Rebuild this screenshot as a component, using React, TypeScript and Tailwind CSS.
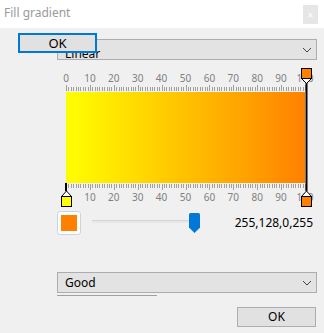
import React from "react";

const TICKS = Array.from({ length: 101 }, (_, i) => i);
const LABELS = Array.from({ length: 11 }, (_, i) => i * 10);
const STEP = 2.39;

function Chevron() {
  return (
    <svg width="10" height="6" viewBox="0 0 10 6" className="shrink-0">
      <polyline points="1,1 5,5 9,1" fill="none" stroke="#444" strokeWidth="1" />
    </svg>
  );
}

function Combo({ label, low }: { label: string; low?: boolean }) {
  return (
    <div className="h-[21px] border border-[#adadad] bg-[#e3e3e3] flex items-center justify-between pl-[7px] pr-[4px]">
      <span className={low ? "relative top-[4px] text-[12px] leading-none" : "text-[12px] leading-none"}>{label}</span>
      <Chevron />
    </div>
  );
}

function Marker({ x, top, color }: { x: number; top: boolean; color: string }) {
  // x is the centre of the marker in overlay coords
  if (top) {
    return (
      <g>
        <polygon points={`${x - 5},10.5 ${x + 5},10.5 ${x},15.5`} fill="#fff" stroke="#000" strokeWidth="1" />
        <rect x={x - 5} y={0.5} width={10} height={10} fill={color} stroke="#000" strokeWidth="1" />
      </g>
    );
  }
  return (
    <g>
      <polygon points={`${x},123 ${x - 5},128.5 ${x + 5},128.5`} fill="#fff" stroke="#000" strokeWidth="1" />
      <rect x={x - 5} y={128.5} width={10} height={10} fill={color} stroke="#000" strokeWidth="1" />
    </g>
  );
}

function GradientEditor() {
  return (
    <div className="relative h-[140px] mt-[8px]">
      {/* the gradient itself */}
      <div className="ml-[9px] mt-[24px] w-[239px] h-[91px] bg-gradient-to-r from-[#ffff00] to-[#ff8000]" />

      {/* rulers and stops */}
      <svg width="260" height="140" viewBox="0 0 260 140" className="absolute inset-0">
        {LABELS.map((n, i) => (
          <text key={"t" + n} x={9 + i * 23.9} y={14} fontSize="10" fill="#808080" textAnchor="middle">
            {n}
          </text>
        ))}
        {TICKS.map((j) => {
          const x = Math.round(9 + j * STEP) + 0.5;
          const major = j % 10 === 0;
          return (
            <g key={"k" + j}>
              <line x1={x} x2={x} y1={major ? 17 : 19} y2={23} stroke="#a0a0a0" strokeWidth="1" />
              <line x1={x} x2={x} y1={116} y2={major ? 122 : 120} stroke="#a0a0a0" strokeWidth="1" />
            </g>
          );
        })}
        {LABELS.map((n, i) => (
          <text key={"b" + n} x={9 + i * 23.9} y={133} fontSize="10" fill="#808080" textAnchor="middle">
            {n}
          </text>
        ))}

        {/* left stop */}
        <line x1={9} x2={9} y1={115} y2={123} stroke="#000" strokeWidth="2" />
        <Marker x={9.5} top={false} color="#ffff00" />

        {/* right stop */}
        <line x1={249.5} x2={249.5} y1={15} y2={123} stroke="#000" strokeWidth="2" />
        <Marker x={249.5} top color="#ff8000" />
        <Marker x={249.5} top={false} color="#ff8000" />
      </svg>
    </div>
  );
}

function SliderThumb() {
  return (
    <svg width="11" height="20" viewBox="0 0 11 20" className="shrink-0 -ml-[2px]">
      <path d="M1.5 0 H9.5 Q11 0 11 1.5 V14.5 L5.5 20 L0 14.5 V1.5 Q0 0 1.5 0 Z" fill="#0078d7" />
    </svg>
  );
}

export default function App() {
  return (
    <div className="relative w-[324px] h-[333px] bg-[#f0f0f0] overflow-hidden font-['Noto_Sans',sans-serif] text-black">
      {/* title bar */}
      <div className="h-[28px] bg-white flex items-start justify-between pl-[4px] pr-[6px]">
        <span className="mt-[5px] text-[12px] text-[#9a9a9a] leading-[16px]">Fill gradient</span>
        <div className="mt-[5px] w-[15px] h-[19px] bg-[#e6e6e6] flex items-center justify-center">
          <span className="text-[8px] text-white leading-none">✕</span>
        </div>
      </div>

      <div className="flex flex-col pl-[57px] pr-[7px]">
        <div className="mt-[11px]">
          <Combo label="Linear" low />
        </div>

        <GradientEditor />

        <div className="mt-[3px] h-[24px] flex items-center">
          <div className="w-[24px] h-[24px] rounded-[3px] border border-[#cbd5e1] bg-white p-[3px]">
            <div className="w-full h-full bg-[#ff8000]" />
          </div>
          <div className="ml-[11px] flex items-start">
            <div className="mt-[7px] w-[99px] h-[3px] bg-[#e7e7e7] border-t border-[#d4d4d4]" />
            <SliderThumb />
          </div>
          <span className="ml-auto mr-[4px] text-[12px] leading-none">255,128,0,255</span>
        </div>

        <div className="mt-[37px]">
          <Combo label="Good" />
        </div>
        <div className="mt-[2px] w-[100px] h-[1px] bg-[#a0a0a0]" />

        <button className="mt-[11px] self-end mr-[1px] w-[79px] h-[20px] border border-[#adadad] bg-[#e1e1e1] text-[12px] leading-none">
          OK
        </button>
      </div>

      {/* focused OK button drawn over the combo */}
      <button className="absolute left-[18px] top-[33px] w-[79px] h-[20px] border-2 border-[#0078d7] bg-[#e1e1e1] text-[13px] leading-none flex items-center justify-center">
        OK
      </button>
    </div>
  );
}
